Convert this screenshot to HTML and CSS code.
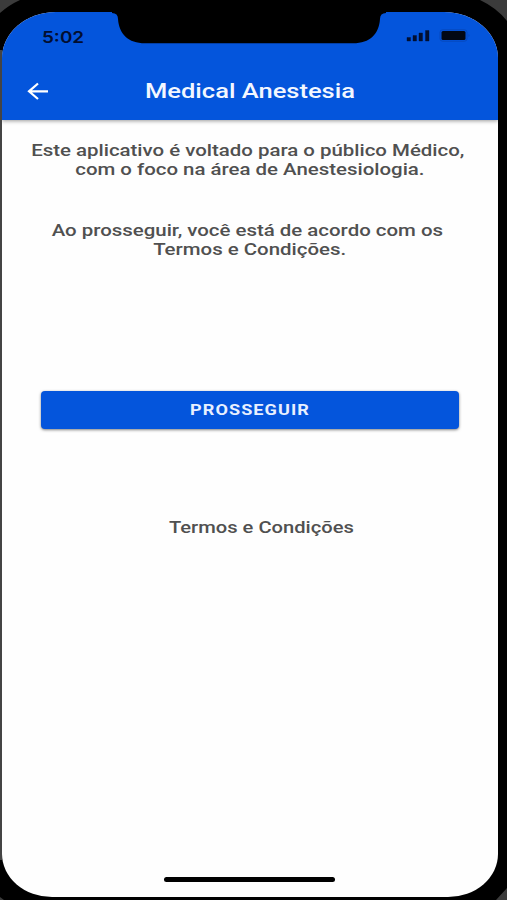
FILE: index.html
```html
<!DOCTYPE html>
<html lang="pt-BR">
<head>
<meta charset="utf-8">
<title>Medical Anestesia</title>
<link rel="stylesheet" href="styles.css">
</head>
<body>
<div class="device">
  <svg class="bezel" viewBox="0 0 507 900" aria-hidden="true">
    <path d="M0 0H20Q9 5 0 13ZM480 0H507V21Q497 8 480 0ZM507 888V900H496ZM0 897L4 900H0Z" fill="#3b3b3b"/>
    <path d="M1 50V860" stroke="#444" stroke-width="2" fill="none"/>
  </svg>
  <main class="screen">
    <header class="header">
      <div class="status">
        <span class="time">5:02</span>
        <svg class="indicators" width="64" height="14" viewBox="0 0 64 14" aria-hidden="true">
          <path d="M1 8.500h3.500v3.500H1zM7 6.500h3.500V12H7zM13 4h3.500v8H13zM19.500 1.500H23V12h-3.500z" fill="#020e30" stroke="#020e30" stroke-width=".4" stroke-linejoin="round"/>
          <rect x="35.500" y="2" width="24" height="9" rx="1.500" fill="#020814"/>
          <rect x="34" y=".8" width="27" height="11.400" rx="2.500" fill="none" stroke="#0649bd"/>
          <path d="M62.500 5q2 1.500 0 3z" fill="#0649bd"/>
        </svg>
      </div>
      <div class="toolbar">
        <svg class="back" width="24" height="20" viewBox="0 0 24 20" aria-label="Voltar">
          <path d="M22 10.300H3M12 2.500L3 10.300l9 7.700" fill="none" stroke="#fff" stroke-width="2.200"/>
        </svg>
        <h1 class="title">Medical Anestesia</h1>
      </div>
    </header>
    <section class="content">
      <p class="text intro"><span class="lead">Este aplicativo é voltado para o público Médico,</span><span>com o foco na área de Anestesiologia.</span></p>
      <p class="text agree"><span class="lead">Ao prosseguir, você está de acordo com os</span><span>Termos e Condições.</span></p>
      <button class="button"><span>PROSSEGUIR</span></button>
      <a class="terms">Termos e Condições</a>
    </section>
    <div class="home"></div>
  </main>
  <svg class="notch" width="274" height="32" viewBox="0 0 274 32" aria-hidden="true">
    <path d="M0 0H274V1Q268 1 268 7C267 22 258 31.300 241 31.300H33C16 31.300 7 22 6 7Q6 1 0 1Z"/>
  </svg>
</div>
</body>
</html>
```
FILE: styles.css
```css
* { box-sizing: border-box; }
body { margin: 0; font-family: Roboto, "Liberation Sans", sans-serif; }
.device { position: relative; width: 507px; height: 900px; padding: 12px 9px 3px 2px; background: #000; overflow: hidden; }
.bezel { position: absolute; inset: 0; width: 507px; height: 900px; }
.notch { position: absolute; left: 112px; top: 12px; }
.screen { position: relative; display: flex; flex-direction: column; width: 496px; height: 885px; background: #fefefe; border-radius: 54px 54px 50px 50px / 46px 46px 43px 43px; overflow: hidden; }
.header { height: 108px; flex: none; background: #0455dc; box-shadow: 0 1px 4px rgba(0, 0, 0, .4); }
.status { display: flex; justify-content: space-between; height: 50px; padding: 15px 28px 0 40px; }
.time { font: 600 16px/20px Inter, sans-serif; color: #020e30; transform: scaleX(1.18); transform-origin: left; }
.indicators { margin-top: 2px; }
.toolbar { display: grid; grid-template-columns: 58px 380px 58px; align-items: center; height: 58px; }
.back { margin-left: 23.5px; }
.title { margin: 0; text-align: center; font-size: 20px; font-weight: 500; line-height: 24px; color: #f3f7ff; transform: scaleX(1.275); }
.content { display: flex; flex-direction: column; align-items: center; color: #505050; }
.text { display: flex; flex-direction: column; align-items: center; margin: 0; width: 496px; font-size: 16px; font-weight: 500; line-height: 19.4px; white-space: nowrap; }
.text span { transform: scaleX(1.276); }
.text .lead { margin-right: 5px; }
.intro { margin-top: 21px; }
.agree { margin-top: 41.2px; }
.button { width: 418px; height: 38px; margin: 131.2px 0 0; padding: 0; border: 0; border-radius: 4px; background: #0455dc; color: #e8f0ff; font: 700 14px/38px Roboto, sans-serif; letter-spacing: .84px; box-shadow: 0 1px 3px rgba(0, 0, 0, .5); }
.button span { display: block; transform: scaleX(1.29); }
.terms { margin: 88px 0 0 22px; font-size: 16px; font-weight: 500; line-height: 20px; transform: translateY(1px) scaleX(1.26); }
.home { position: absolute; left: 162px; bottom: 15px; width: 171px; height: 5px; border-radius: 3px; background: #000; }
```
